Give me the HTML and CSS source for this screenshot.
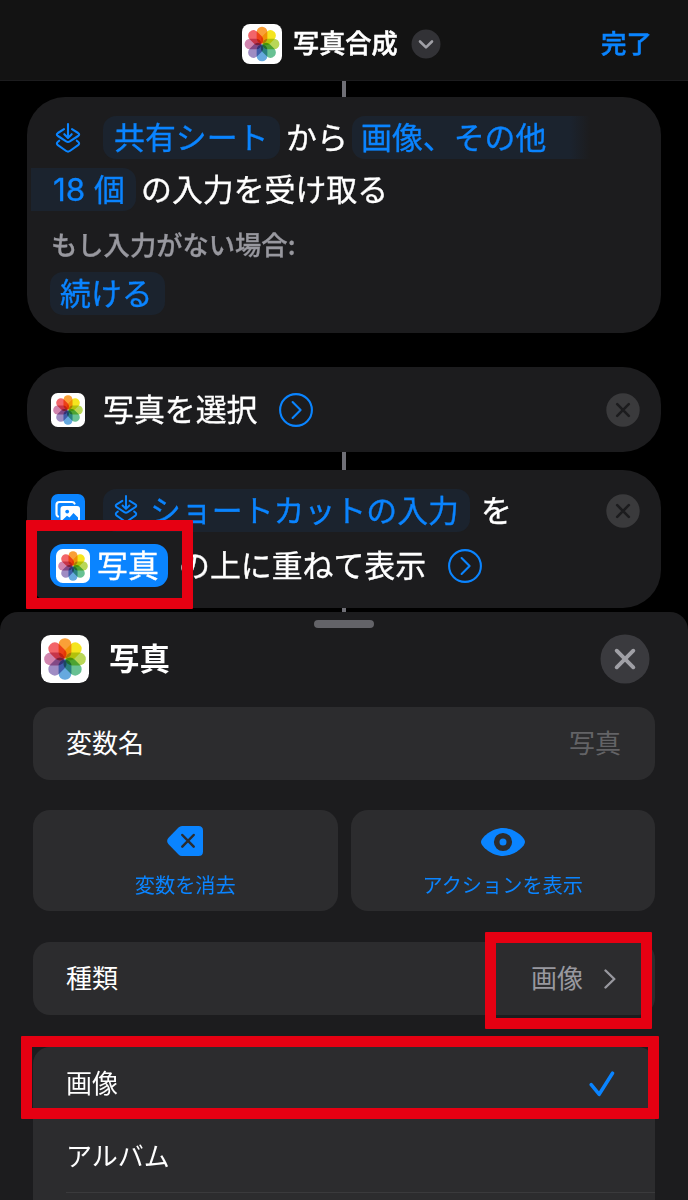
FILE: index.html
```
<!DOCTYPE html>
<html lang="ja">
<head>
<meta charset="utf-8">
<title>写真合成</title>
<link rel="stylesheet" href="styles.css">
</head>
<body>
<svg class="defs" aria-hidden="true">
  <symbol id="photos" viewBox="0 0 48 48">
    <rect width="48" height="48" rx="9.5" fill="#fff"/>
    <g class="petals">
      <rect class="petal" x="17.6" y="3.2" width="12.8" height="20.2" rx="6.2" fill="#faa037"/>
      <rect class="petal" x="17.6" y="3.2" width="12.8" height="20.2" rx="6.2" fill="#f5e51e" transform="rotate(45 24 24)"/>
      <rect class="petal" x="17.6" y="3.2" width="12.8" height="20.2" rx="6.2" fill="#b9d757" transform="rotate(90 24 24)"/>
      <rect class="petal" x="17.6" y="3.2" width="12.8" height="20.2" rx="6.2" fill="#68c193" transform="rotate(135 24 24)"/>
      <rect class="petal" x="17.6" y="3.2" width="12.8" height="20.2" rx="6.2" fill="#66a9df" transform="rotate(180 24 24)"/>
      <rect class="petal" x="17.6" y="3.2" width="12.8" height="20.2" rx="6.2" fill="#9f8cc3" transform="rotate(225 24 24)"/>
      <rect class="petal" x="17.6" y="3.2" width="12.8" height="20.2" rx="6.2" fill="#d184ae" transform="rotate(270 24 24)"/>
      <rect class="petal" x="17.6" y="3.2" width="12.8" height="20.2" rx="6.2" fill="#f2656a" transform="rotate(315 24 24)"/>
    </g>
  </symbol>
  <symbol id="input" viewBox="0 0 26 32">
    <g fill="none" stroke="#0a84ff" stroke-width="2.1" stroke-linecap="round" stroke-linejoin="round">
      <path d="M13 2V15.600M9.300 12.200L13 15.900L16.700 12.200"/>
      <path d="M9 7.200L2.900 11Q.8 12.500 2.900 14L11.200 19.400Q13 20.500 14.800 19.400L23.100 14Q25.200 12.500 23.100 11L17 7.200"/>
      <path d="M4.200 18.700L2.900 19.800Q.9 21.500 2.900 23.200L11.200 29Q13 30.200 14.800 29L23.100 23.200Q25.100 21.500 23.100 19.800L21.800 18.700"/>
    </g>
  </symbol>
  <symbol id="go" viewBox="0 0 34 34">
    <g fill="none" stroke="#0a84ff" stroke-width="2.1" stroke-linecap="round" stroke-linejoin="round">
      <circle cx="17" cy="17" r="15.900"/>
      <path d="M13.600 9L21.600 17L13.600 25"/>
    </g>
  </symbol>
  <symbol id="remove" viewBox="0 0 34 34">
    <circle cx="17" cy="17" r="16.700" fill="#3a3a3c"/>
    <path d="M11.200 11.200L22.800 22.800M22.800 11.200L11.200 22.800" stroke="#1c1c1e" stroke-width="2.600" stroke-linecap="round"/>
  </symbol>
</svg>

<div class="screen">
  <header class="topbar">
    <div class="topbar-title">
      <svg class="icon-40"><use href="#photos"/></svg>
      <h1>写真合成</h1>
      <svg class="icon-chevron" viewBox="0 0 30 30"><circle cx="15" cy="15" r="14.500" fill="#323236"/><path d="M9 12.500L15 18.400L21 12.500" fill="none" stroke="#a0a0a6" stroke-width="2.600" stroke-linecap="round" stroke-linejoin="round"/></svg>
    </div>
    <span class="done">完了</span>
  </header>

  <main class="flow">
    <i class="link link-top"></i>
    <section class="card card-input">
      <div class="line">
        <svg class="icon-input"><use href="#input"/></svg>
        <span class="token share">共有シート</span>
        <span class="from text">から</span>
        <span class="token token-open">画像、その他</span>
      </div>
      <div class="line line-second">
        <span class="token token-rest"><span class="num">18</span>個</span>
        <span class="receive text">の入力を受け取る</span>
      </div>
      <p class="hint">もし入力がない場合:</p>
      <div class="line"><span class="token resume">続ける</span></div>
    </section>

    <section class="card card-pick">
      <svg class="icon-34"><use href="#photos"/></svg>
      <span class="pick-label text">写真を選択</span>
      <svg class="icon-34"><use href="#go"/></svg>
      <svg class="icon-34 push"><use href="#remove"/></svg>
    </section>
    <i class="link"></i>

    <section class="card card-overlay">
      <div class="line">
        <svg class="icon-34" viewBox="0 0 34 34">
          <rect width="34" height="34" rx="7" fill="#0a84ff"/>
          <path d="M7 22.500Q5.500 22 5.500 20V11Q5.500 8 8.500 8H21Q23 8 23.500 9.500" fill="none" stroke="#fff" stroke-width="2.200" stroke-linecap="round"/>
          <rect x="9.500" y="12" width="19.500" height="16" rx="3" fill="#fff"/>
          <circle cx="16.200" cy="17.600" r="1.900" fill="#0a84ff"/>
          <path d="M11.500 26L16 21.700L18.500 23.500L22.500 19L27 23.500V26Z" fill="#0a84ff"/>
        </svg>
        <span class="token shortcut-token"><svg class="icon-input-sm"><use href="#input"/></svg>ショートカットの入力</span>
        <span class="particle text">を</span>
        <svg class="icon-34 push"><use href="#remove"/></svg>
      </div>
      <div class="line line-photo">
        <span class="token selected"><svg class="icon-34 selected-icon"><use href="#photos"/></svg>写真</span>
        <span class="over text">の上に重ねて表示</span>
        <svg class="icon-34"><use href="#go"/></svg>
      </div>
      <i class="mark mark-variable"></i>
    </section>
    <i class="link link-end"></i>
  </main>

  <section class="sheet">
    <i class="handle"></i>
    <div class="sheet-head">
      <svg class="icon-48"><use href="#photos"/></svg>
      <h2>写真</h2>
      <svg class="icon-50 push" viewBox="0 0 50 50"><circle cx="25" cy="25" r="24.500" fill="#3a3a3e"/><path d="M16.700 16.700L33.300 33.300M33.300 16.700L16.700 33.300" stroke="#a0a0a6" stroke-width="3.900" stroke-linecap="round"/></svg>
    </div>
    <div class="field"><span class="label">変数名</span><span class="label placeholder">写真</span></div>
    <div class="actions">
      <div class="action">
        <svg class="icon-delete" viewBox="0 0 36 30"><path d="M15 0H31.500Q36 0 36 4.500V25.500Q36 30 31.500 30H15Q13 30 11.500 28.500L1.300 18Q-1 15 1.300 12L11.500 1.500Q13 0 15 0Z" fill="#0a84ff"/><path d="M15.300 9L26.700 20.700M26.700 9L15.300 20.700" stroke="#2c2c2e" stroke-width="2.500" stroke-linecap="round"/></svg>
        <span>変数を消去</span>
      </div>
      <div class="action">
        <svg class="icon-eye" viewBox="0 0 44 28"><path d="M22 0C33 0 44 9.500 44 14S33 28 22 28S0 18.500 0 14S11 0 22 0Z" fill="#0a84ff"/><circle cx="22" cy="14" r="6.300" fill="#0a84ff" stroke="#2c2c2e" stroke-width="5.600"/></svg>
        <span>アクションを表示</span>
      </div>
    </div>
    <div class="field field-type">
      <span class="label">種類</span>
      <span class="label value">画像</span>
      <svg class="icon-next" viewBox="0 0 12 20"><path d="M1.500 1.500L10.300 10L1.500 18.500" fill="none" stroke="#98989f" stroke-width="2.400" stroke-linecap="round" stroke-linejoin="round"/></svg>
      <i class="mark mark-type"></i>
    </div>
    <div class="list">
      <div class="option">
        <span class="label">画像</span>
        <svg class="icon-check" viewBox="0 0 26 26"><path d="M2.200 13.700L10.200 23.300L23.500 2.200" fill="none" stroke="#0a84ff" stroke-width="3.500" stroke-linecap="round" stroke-linejoin="round"/></svg>
        <i class="mark mark-option"></i>
      </div>
      <div class="option option-album"><span class="label">アルバム</span></div>
    </div>
  </section>
</div>
</body>
</html>
```
FILE: styles.css
```
* { box-sizing: border-box; }
body {
  margin: 0;
  background: #000;
  color: #fff;
  font-family: "Noto Sans CJK JP", sans-serif;
}
h1, h2, p { margin: 0; }
svg { display: block; flex: none; }
i { display: block; }
.defs { position: absolute; width: 0; height: 0; }
.petals { isolation: isolate; }
.petal { mix-blend-mode: multiply; }

.screen {
  width: 688px;
  height: 1200px;
  overflow: hidden;
  display: flex;
  flex-direction: column;
}
.icon-34 { width: 34px; height: 34px; }
.icon-40 { width: 40px; height: 40px; }
.icon-48 { width: 48px; height: 48px; }
.icon-50 { width: 50px; height: 50px; }
.push { margin-left: auto; }

.topbar {
  flex: none;
  height: 81px;
  padding: 7px 36px 0 242px;
  background: #131313;
  border-bottom: 1px solid #1c1c1e;
  display: flex;
  align-items: center;
  justify-content: space-between;
}
.topbar-title { display: flex; align-items: center; }
.topbar h1 {
  margin: 0 13px 0 11px;
  padding-bottom: 4px;
  font-size: 26.2px;
  line-height: 38px;
  font-weight: 500;
  -webkit-text-stroke: 0.5px;
}
.icon-chevron { width: 30px; height: 30px; }
.done {
  padding-bottom: 4px;
  color: #0a84ff;
  font-size: 25.500px;
  line-height: 38px;
  font-weight: 500;
  -webkit-text-stroke: 0.5px;
}

.flow {
  flex: none;
  height: 531px;
  padding: 0 27px;
  display: flex;
  flex-direction: column;
}
.link { flex: none; align-self: center; width: 4px; height: 18px; background: #6f6f76; }
.link-top { height: 16px; }
.link-end { height: 4px; }
.card {
  flex: none;
  background: #1c1c1e;
  border-radius: 38px;
  font-size: 30.900px;
  line-height: 40px;
  white-space: nowrap;
}
.line { display: flex; align-items: center; height: 43px; }
.text { padding-bottom: 3px; -webkit-text-stroke: 0.35px; }
.token {
  height: 43px;
  padding-bottom: 3px;
  display: flex;
  align-items: center;
  color: #0a84ff;
  background: #1b232e;
  border-radius: 13px;
  -webkit-text-stroke: 0.35px;
}
.card-input { height: 236px; margin-bottom: 34px; padding: 19px 24px 0; }
.icon-input { width: 26px; height: 32px; margin: 0 22px 0 4px; }
.share { width: 177px; padding-left: 11px; }
.from { width: 66px; margin-left: 6px; }
.token-open {
  width: 238px;
  padding-left: 9px;
  border-radius: 13px 0 0 13px;
  background: linear-gradient(90deg, #1b232e 218px, #1c1c1e 238px);
}
.line-second { margin: 9px 0 0 -20px; }
.token-rest { width: 105px; padding-left: 22px; border-radius: 0 13px 13px 0; }
.num { margin-top: 3px; font-family: Inter, sans-serif; font-size: 31.500px; width: 41px; }
.receive { margin-left: 5px; }
.hint {
  height: 61px;
  color: #98989f;
  font-size: 26.300px;
  font-weight: 500;
  line-height: 65px;
  -webkit-text-stroke: 0.3px;
}
.resume { width: 115px; margin-left: -1px; padding-left: 10px; }

.card-pick { height: 85px; padding: 0 21px 0 24px; display: flex; align-items: center; }
.pick-label { width: 175px; margin: 0 1px 0 18px; }
.card-overlay { position: relative; height: 138px; padding: 19px 21px 0 24px; }
.shortcut-token { width: 367px; margin-left: 18px; padding-left: 11px; }
.icon-input-sm { width: 24px; height: 30px; margin: 0 12px 0 0; }
.particle { margin-left: 11px; }
.line-photo { margin: 12px 0 0 -1px; }
.selected { width: 118px; padding-left: 6px; gap: 7px; background: #0a84ff; color: #fff; }
.selected-icon { margin-top: 3px; }
.over { width: 269px; margin-left: 11px; }

.mark {
  position: absolute;
  z-index: 2;
  border: 11px solid #e60012;
  border-radius: 1px;
}
.mark-variable { left: -1px; top: 50px; width: 167px; height: 89px; }
.mark-type { left: 452px; top: -10px; width: 167px; height: 97px; }
.mark-option { left: -12px; top: -11px; width: 638px; height: 83px; }

.sheet {
  flex: 1;
  min-height: 0;
  padding: 8px 33px 0;
  background: #1c1c1e;
  border-radius: 18px 18px 0 0;
  font-size: 26px;
}
.handle { width: 60px; height: 8px; margin: 0 auto; border-radius: 4px; background: #636368; }
.sheet-head {
  height: 79px;
  padding: 0 5px 17px 8px;
  display: flex;
  align-items: center;
}
.sheet-head h2 {
  margin-left: 20px;
  padding-bottom: 3px;
  font-size: 30.500px;
  line-height: 45px;
  font-weight: 700;
}
.field {
  position: relative;
  height: 73px;
  padding: 0 34px 0 33px;
  display: flex;
  align-items: center;
  background: #2c2c2e;
  border-radius: 17px;
}
.label { padding-bottom: 3px; line-height: 38px; }
.placeholder { margin-left: auto; color: #636366; }
.actions { display: flex; gap: 13px; margin: 30px 0 31px; }
.action {
  flex: 1;
  height: 101px;
  padding-top: 16px;
  display: flex;
  flex-direction: column;
  align-items: center;
  justify-content: space-between;
  padding-bottom: 12px;
  background: #2c2c2e;
  border-radius: 17px;
  color: #0a84ff;
  font-size: 20.200px;
  line-height: 28px;
}
.icon-delete { width: 36px; height: 30px; }
.icon-eye { width: 44px; height: 28px; margin-top: 2px; }
.value { margin-left: auto; color: #98989f; }
.field-type { padding-right: 39px; }
.icon-next { width: 12px; height: 20px; margin-left: 21px; }
.list { margin-top: 32px; background: #2c2c2e; border-radius: 17px 17px 0 0; }
.option {
  position: relative;
  height: 73px;
  padding: 0 40px 0 33px;
  display: flex;
  align-items: center;
  justify-content: space-between;
}
.icon-check { width: 26px; height: 26px; }
.option-album {
  height: 80px;
  padding-bottom: 8px;
  background: linear-gradient(#3a3a3c, #3a3a3c) 33px 72px / 589px 1px no-repeat;
}
```
